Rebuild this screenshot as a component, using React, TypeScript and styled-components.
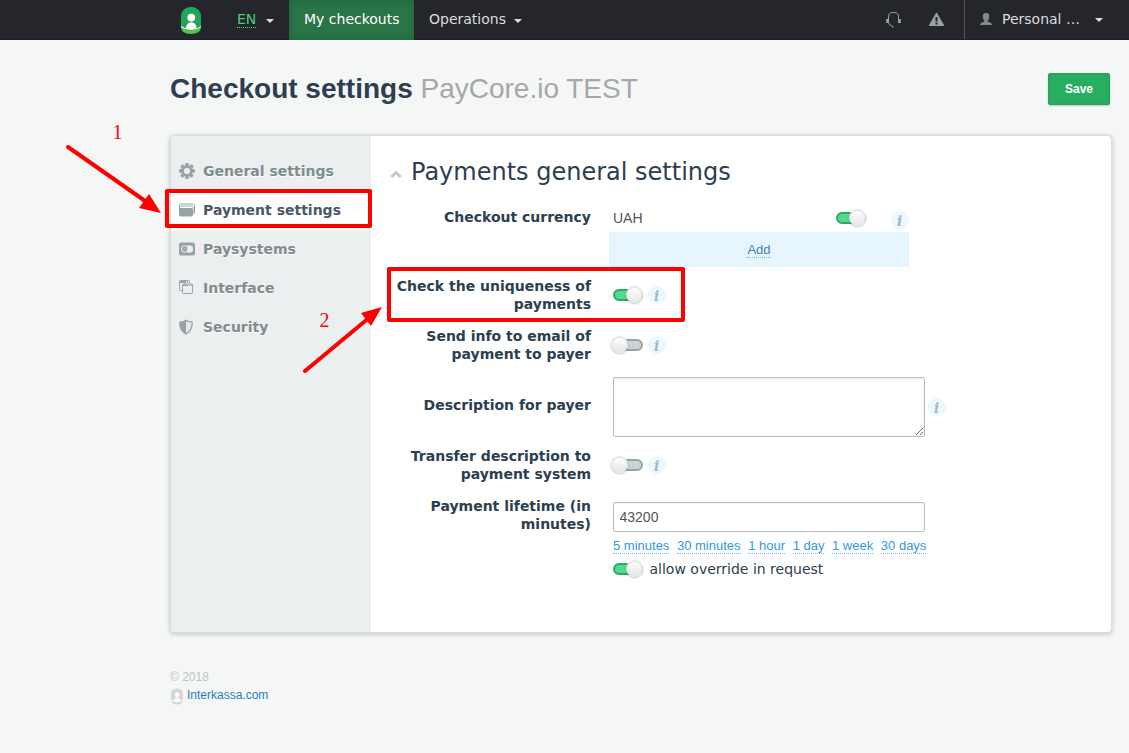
import React from "react";
import styled, { createGlobalStyle, css } from "styled-components";

const Global = createGlobalStyle`
  *, *::before, *::after { box-sizing: border-box; }
  html, body { margin: 0; padding: 0; }
  body {
    background: #f5f7f6;
    color: #2c3e50;
    font: 14px/18px "DejaVu Sans", sans-serif;
    overflow: hidden;
  }
`;

const sans = `"Liberation Sans", Arial, sans-serif`;

const Page = styled.div`
  position: relative;
  width: 1129px;
  height: 753px;
`;

const TopBar = styled.header`
  display: flex;
  align-items: stretch;
  height: 40px;
  padding-left: 181px;
  background: #25262c;
  border-bottom: 1px solid #1d1e23;
  color: #dcdddf;
`;

const LogoLink = styled.a`
  display: flex;
  width: 56px;
  padding-top: 7px;
`;

const NavItem = styled.a<{ $active?: boolean; $width: number; $pad?: number }>`
  display: flex;
  flex: none;
  width: ${(p) => p.$width}px;
  padding: 10px 0 0 ${(p) => p.$pad ?? 0}px;
  line-height: 18px;
  white-space: nowrap;
  height: 40px;
  ${(p) =>
    p.$active &&
    css`
      background: #2a7548;
      color: #fff;
      box-shadow: inset 0 0 8px rgba(0, 0, 0, 0.18);
    `}
`;

const Lang = styled.span`
  height: 18px;
  border-bottom: 1px dotted #58d68d;
  color: #4fc97f;
`;

const Caret = styled.i<{ $gap: number; $top?: number }>`
  width: 0;
  height: 0;
  margin: ${(p) => p.$top ?? 9}px 0 0 ${(p) => p.$gap}px;
  border: 4px solid transparent;
  border-top-color: #dcdddf;
  border-bottom: 0;
`;

const Spacer = styled.div`
  flex: 1;
`;

const IconLink = styled.a<{ $width: number; $top: number }>`
  width: ${(p) => p.$width}px;
  padding-top: ${(p) => p.$top}px;
`;

const Account = styled.a`
  display: flex;
  width: 165px;
  padding: 10px 0 0 15px;
  border-left: 1px solid #55565b;

  svg { margin: 3px 10px 0 0; }
`;

const Container = styled.div`
  width: 942px;
  margin-left: 170px;
`;

const TitleRow = styled.div`
  display: flex;
  justify-content: space-between;
  height: 95px;
  padding: 33px 2px 0 0;
`;

const Title = styled.h1`
  margin: 0;
  font: bold 28px/32px ${sans};
  color: #2c3e50;

  small {
    font-size: 28px;
    font-weight: normal;
    color: #a6a8a8;
  }
`;

const SaveButton = styled.button`
  width: 62px;
  height: 32px;
  padding: 0;
  border: 1px solid #24a35a;
  border-radius: 2px;
  background: #27ae60;
  box-shadow: 0 1px 2px rgba(0, 0, 0, 0.2), inset 0 0 2px rgba(0, 0, 0, 0.12);
  color: #fff;
  font: bold 12px/30px ${sans};
`;

const Panel = styled.section`
  display: flex;
  height: 498px;
  border: 1px solid #d8dcdd;
  border-radius: 4px;
  background: #fff;
  box-shadow: 0 1px 5px rgba(0, 0, 0, 0.22);
  overflow: hidden;
`;

const Sidebar = styled.nav`
  flex: none;
  width: 200px;
  padding-top: 16px;
  background: #ebeff0;
`;

const SideItem = styled.a<{ $active?: boolean }>`
  display: flex;
  align-items: center;
  height: 39px;
  padding: 0 0 1px 8px;
  background: ${(p) => (p.$active ? "#fff" : "transparent")};
  color: ${(p) => (p.$active ? "#4e5666" : "#7f8c8d")};
  font-weight: bold;
  text-shadow: 0 1px 0 #fff;

  svg { flex: none; width: 16px; height: 16px; margin-right: 8px; }
`;

const Main = styled.main`
  flex: 1;
  padding: 21px 0 0 19px;
`;

const SectionHead = styled.h2`
  display: flex;
  height: 50px;
  margin: 0;
  font-size: 24px;
  line-height: 30px;
  font-weight: normal;

  svg { margin: 12px 9px 0 0; }
`;

const Field = styled.div<{ $gap?: number }>`
  display: grid;
  grid-template-columns: 201px 1fr;
  column-gap: 22px;
  margin-bottom: ${(p) => p.$gap ?? 14}px;
`;

const Label = styled.label<{ $top?: number }>`
  padding-top: ${(p) => p.$top ?? 0}px;
  font-weight: bold;
  text-align: right;
`;

const Controls = styled.div<{ $top?: number; $gap?: number }>`
  display: flex;
  align-items: center;
  gap: ${(p) => p.$gap ?? 5}px;
  height: ${(p) => (p.$top === undefined ? 36 : 18)}px;
  margin-top: ${(p) => p.$top ?? 0}px;
`;

const Track = styled.span<{ $on?: boolean }>`
  display: block;
  flex: none;
  width: 30px;
  height: 12px;
  border: 2px solid ${(p) => (p.$on ? "#27ae60" : "#95a5a6")};
  border-radius: 6px;
  background: ${(p) => (p.$on ? "#58d68d" : "#cbd2d5")};

  &::after {
    content: "";
    display: block;
    width: 17px;
    height: 17px;
    margin: -5px 0 0 ${(p) => (p.$on ? 11 : -4)}px;
    border: 2px solid #e6e9eb;
    border-radius: 50%;
    background: linear-gradient(#fdfdfd, #e9e9e9);
    box-shadow: 0 1px 2px rgba(0, 0, 0, 0.25);
  }
`;

const InfoDot = styled.span`
  flex: none;
  width: 18px;
  height: 18px;
  padding-right: 1px;
  border-radius: 50%;
  background: #ecf7fe;
  color: #9fb6c8;
  font: italic bold 15px/20px "DejaVu Serif Condensed", "DejaVu Serif", serif;
  text-align: center;
`;

const Currency = styled.div`
  width: 300px;
  height: 56px;
  margin-left: -4px;
`;

const CurrencyRow = styled.div`
  display: flex;
  height: 25px;
  padding-left: 4px;
  color: #555;
  font: 14px/22px ${sans};

  > :nth-child(1) { width: 223px; }
  > :nth-child(2) { margin: 5px 25px 0 0; }
  > :nth-child(3) { margin-top: 4px; }
`;

const AddRow = styled.div`
  display: flex;
  justify-content: center;
  height: 35px;
  padding-top: 10px;
  background: #e6f5fe;
`;

const DottedLink = styled.a<{ $deep?: boolean }>`
  height: 16px;
  border-bottom: 1px dotted ${(p) => (p.$deep ? "#7fb3d5" : "#6fb5e5")};
  color: ${(p) => (p.$deep ? "#3a86b8" : "#3498db")};
  font: 13px/15px ${sans};
`;

const Area = styled.textarea`
  display: block;
  width: 312px;
  height: 60px;
  border: 1px solid #b9bdc1;
  border-radius: 2px;
  box-shadow: inset 0 1px 2px rgba(0, 0, 0, 0.08);
  background: #fff;
`;

const AreaWrap = styled.div`
  display: flex;
  align-items: center;
  gap: 3px;
`;

const Input = styled.input`
  display: block;
  width: 312px;
  height: 30px;
  margin-top: 5px;
  padding: 0 5.5px;
  border: 1px solid #b9bdc1;
  border-radius: 2px;
  box-shadow: inset 0 1px 2px rgba(0, 0, 0, 0.06);
  color: #555;
  font: 14px/28px ${sans};
`;

const Presets = styled.div`
  display: flex;
  gap: 7.6px;
  height: 16px;
  margin-top: 6px;
  white-space: nowrap;
`;

const Footer = styled.footer`
  padding-top: 35px;
  color: #bdc3c7;
  font: 12px/18px ${sans};
`;

const FootLink = styled.a`
  display: flex;
  gap: 4px;
  padding-left: 1px;
  color: #2980b9;

  svg { margin-top: 2px; }
`;

const Highlight = styled.div<{ $x: number; $y: number; $w: number; $h: number }>`
  position: absolute;
  left: ${(p) => p.$x}px;
  top: ${(p) => p.$y}px;
  width: ${(p) => p.$w}px;
  height: ${(p) => p.$h}px;
  border: 4px solid #f00;
  border-radius: 2px;
`;

const Marks = styled.svg`
  position: absolute;
  inset: 0;
  pointer-events: none;
`;

const StepNumber = styled.span<{ $x: number; $y: number }>`
  position: absolute;
  left: ${(p) => p.$x}px;
  top: ${(p) => p.$y}px;
  color: #f00;
  font: 20px/22px "Liberation Serif", serif;
`;

const Logo = ({ w, h, grey }: { w: number; h: number; grey?: boolean }) => (
  <svg width={w} height={h} viewBox="0 0 20 27">
    <path d="M0 9A9 9 0 0 1 9 0H11A9 9 0 0 1 20 9V19.5Q10 24 0 19.5Z" fill={grey ? "#d5d8d8" : "#1fa65a"} />
    <path d="M0 19.5Q10 25.5 20 19.5Q20 27 10 27T0 19.5Z" fill={grey ? "#d5d8d8" : "#4cc84a"} />
    <circle cx="10.3" cy="10.6" r="3.9" fill="#fff" />
    <path d="M4.8 21.2Q5.8 15.2 10.3 15.2T15.8 21.2L20 19V20.3Q10 25.8 0 20.3V19Z" fill="#fff" />
  </svg>
);

const Gear = () => (
  <svg viewBox="0 0 16 16" fill="#95a5a6">
    {[0, 45, 90, 135].map((a) => (
      <rect key={a} x="6.3" y="0" width="3.4" height="16" rx=".6" transform={`rotate(${a} 8 8)`} />
    ))}
    <circle cx="8" cy="8" r="6" />
    <circle cx="8" cy="8" r="3.1" fill="#ebeff0" />
  </svg>
);

const Wallet = () => (
  <svg viewBox="0 0 16 16">
    <path d="M.5 6V3.5Q.5 2 2 2H13.5Q15.5 2 15.5 3.5V11.5" fill="none" stroke="#95a5a6" />
    <path d="M1 4H12.5Q14 4 14 5.5V12.5" fill="none" stroke="#95a5a6" strokeWidth=".9" />
    <path d="M0 5.2Q.5 6 2 6H12Q14 6 14 7.5V12.5Q14 14.5 12 14.5H2Q0 14.5 0 12.5Z" fill="#95a5a6" />
  </svg>
);

const Paysystem = () => (
  <svg viewBox="0 0 16 16">
    <rect y="1.5" width="16" height="13" rx="2" fill="#95a5a6" />
    <circle cx="10.4" cy="8" r="3.7" fill="#ebeff0" />
    <circle cx="5.6" cy="8" r="3.3" fill="#95a5a6" stroke="#ebeff0" />
    <circle cx="5.6" cy="8" r="1.6" fill="#a8b5b6" />
  </svg>
);

const Windows = () => (
  <svg viewBox="0 0 16 16" fill="none" stroke="#95a5a6">
    <path d="M3 10.5H1.5Q.5 10.5 .5 9.5V1.5Q.5.5 1.5.5H9.5Q10.5.5 10.5 1.5V3" />
    <path d="M1 2H10" strokeWidth="2" strokeDasharray="6 1 1 1" />
    <rect x="3.5" y="4" width="10" height="9.5" rx="1" fill="#ebeff0" />
    <path d="M4 5.2H13" strokeWidth="1.6" strokeDasharray="5 1 1 1" />
  </svg>
);

const Shield = () => (
  <svg viewBox="0 0 16 16">
    <path d="M7 .5Q9.5 2.3 13.8 2.5C14 8.5 12.5 12.8 7 15.8C1.5 12.8 0 8.5.2 2.5Q4.5 2.3 7 .5Z" fill="#95a5a6" />
    <path d="M7 2.2Q9.3 3.5 12.5 3.6C12.4 8.5 11 11.8 7 14.3Z" fill="#e3e9ea" />
  </svg>
);

const menu = [
  { text: "General settings", icon: <Gear /> },
  { text: "Payment settings", icon: <Wallet />, active: true },
  { text: "Paysystems", icon: <Paysystem /> },
  { text: "Interface", icon: <Windows /> },
  { text: "Security", icon: <Shield /> },
];

const presets = ["5 minutes", "30 minutes", "1 hour", "1 day", "1 week", "30 days"];

const Info = () => <InfoDot>i</InfoDot>;

export default function App() {
  return (
    <Page>
      <Global />
      <TopBar>
        <LogoLink><Logo w={20} h={27} /></LogoLink>
        <NavItem $width={52}><Lang>EN</Lang><Caret $gap={10} /></NavItem>
        <NavItem $width={125} $pad={15} $active>My checkouts</NavItem>
        <NavItem $width={120} $pad={15}>Operations<Caret $gap={8} /></NavItem>
        <Spacer />
        <IconLink $width={43} $top={12}>
          <svg width="16" height="16" viewBox="0 0 16 16" fill="none" stroke="#95a5a6">
            <path d="M2.5 11V5Q2.5.5 6.5.5H8.5Q12.5.5 12.5 5V11" />
            <path d="M2.5 10.5Q2.8 13.5 6.8 14.2V16" />
            <path d="M1.2 7V11M13.8 7V11" strokeWidth="2" />
          </svg>
        </IconLink>
        <IconLink $width={35} $top={12}>
          <svg width="15" height="15" viewBox="0 0 15 15">
            <path d="M7 1Q7.5.4 8 1L15 13Q15 14 14.2 14H.8Q0 14 0 13Z" fill="#95a5a6" />
            <path d="M6.5 5H8.5V9.5H6.5ZM6.5 10.6H8.5V12.4H6.5Z" fill="#25262c" />
          </svg>
        </IconLink>
        <Account>
          <svg width="12" height="12" viewBox="0 0 12 12.3" fill="#7f8c8d">
            <path d="M6 0Q9.5 0 9.3 3.5T7.8 7.8V9Q12 9.8 12 12.3H0Q0 9.8 4.2 9V7.8Q2.8 6.8 2.7 3.5T6 0Z" />
          </svg>
          Personal …
          <Caret $gap={15} $top={8} />
        </Account>
      </TopBar>
      <Container>
        <TitleRow>
          <Title>Checkout settings <small>PayCore.io TEST</small></Title>
          <SaveButton>Save</SaveButton>
        </TitleRow>
        <Panel>
          <Sidebar>
            {menu.map((m) => (
              <SideItem key={m.text} $active={m.active}>{m.icon}{m.text}</SideItem>
            ))}
          </Sidebar>
          <Main>
            <SectionHead>
              <svg width="12" height="10" viewBox="0 0 12 10" fill="none" stroke="#c3c8ca" strokeWidth="2.8">
                <path d="M1.5 8L6 3.5L10.5 8" />
              </svg>
              Payments general settings
            </SectionHead>
            <Field>
              <Label $top={1}>Checkout currency</Label>
              <Currency>
                <CurrencyRow><span>UAH</span><Track $on /><Info /></CurrencyRow>
                <AddRow><DottedLink $deep>Add</DottedLink></AddRow>
              </Currency>
            </Field>
            <Field>
              <Label>Check the uniqueness of payments</Label>
              <Controls><Track $on /><Info /></Controls>
            </Field>
            <Field>
              <Label>Send info to email of payment to payer</Label>
              <Controls><Track /><Info /></Controls>
            </Field>
            <Field $gap={10}>
              <Label $top={19}>Description for payer</Label>
              <AreaWrap><Area /><Info /></AreaWrap>
            </Field>
            <Field>
              <Label>Transfer description to payment system</Label>
              <Controls><Track /><Info /></Controls>
            </Field>
            <Field>
              <Label>Payment lifetime (in minutes)</Label>
              <div>
                <Input defaultValue="43200" />
                <Presets>
                  {presets.map((p) => <DottedLink key={p}>{p}</DottedLink>)}
                </Presets>
                <Controls $top={6} $gap={6.5}><Track $on />allow override in request</Controls>
              </div>
            </Field>
          </Main>
        </Panel>
        <Footer>
          © 2018
          <FootLink><Logo w={12} h={17} grey />Interkassa.com</FootLink>
        </Footer>
      </Container>
      <Highlight $x={165} $y={189} $w={207} $h={39} />
      <Highlight $x={387} $y={267} $w={298} $h={55} />
      <Marks width="1129" height="753" fill="#f00">
        <path d="M68 147L148 203M305 371L370 317" stroke="#f00" strokeWidth="4" strokeLinecap="round" />
        <path d="M161 213L139 208L149 194ZM382 307L371 326L361 313Z" />
      </Marks>
      <StepNumber $x={112.5} $y={121}>1</StepNumber>
      <StepNumber $x={319.5} $y={309}>2</StepNumber>
    </Page>
  );
}
